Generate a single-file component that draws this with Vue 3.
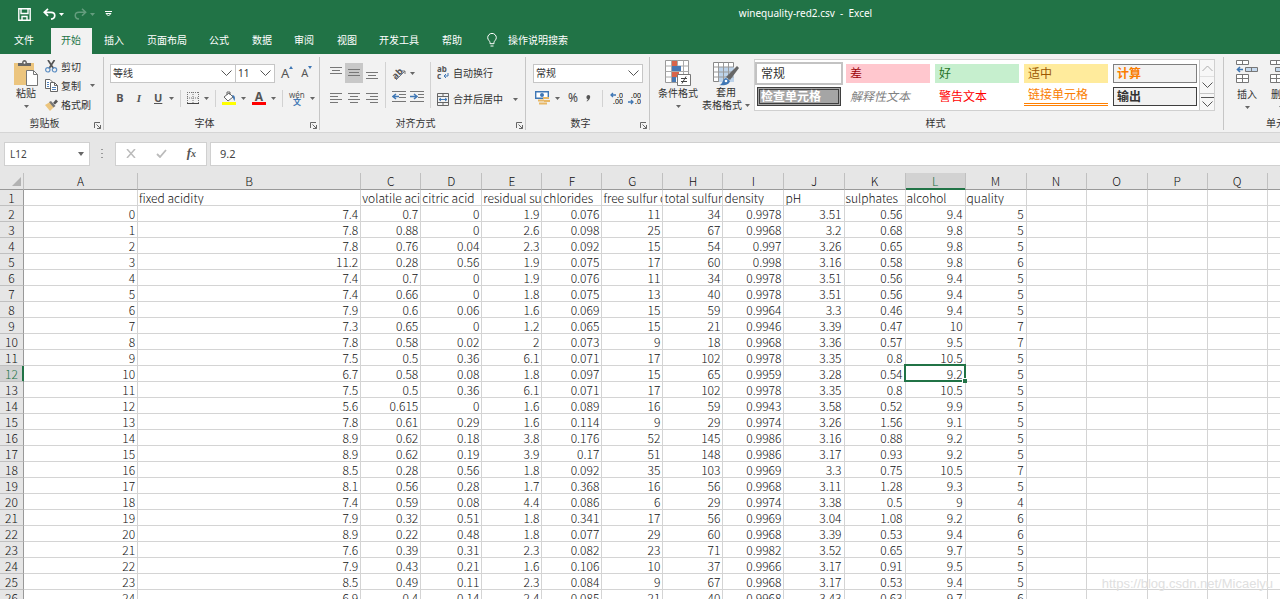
<script setup>
import { ref } from 'vue'

const tabs = ['文件', '开始', '插入', '页面布局', '公式', '数据', '审阅', '视图', '开发工具', '帮助']
const activeTab = ref('开始')

const cellStyles = [
  { name: '常规', kind: 'normal' },
  { name: '差', kind: 'bad' },
  { name: '好', kind: 'good' },
  { name: '适中', kind: 'neutral' },
  { name: '计算', kind: 'calc' },
  { name: '检查单元格', kind: 'check' },
  { name: '解释性文本', kind: 'explain' },
  { name: '警告文本', kind: 'warn' },
  { name: '链接单元格', kind: 'linked' },
  { name: '输出', kind: 'output' },
]

const columns = 'ABCDEFGHIJKLMNOPQR'.split('')
const headings = ['', 'fixed acidity', 'volatile acidity', 'citric acid', 'residual sugar', 'chlorides', 'free sulfur dioxide', 'total sulfur dioxide', 'density', 'pH', 'sulphates', 'alcohol', 'quality']
const records = `7.4 0.7 0 1.9 0.076 11 34 0.9978 3.51 0.56 9.4 5
7.8 0.88 0 2.6 0.098 25 67 0.9968 3.2 0.68 9.8 5
7.8 0.76 0.04 2.3 0.092 15 54 0.997 3.26 0.65 9.8 5
11.2 0.28 0.56 1.9 0.075 17 60 0.998 3.16 0.58 9.8 6
7.4 0.7 0 1.9 0.076 11 34 0.9978 3.51 0.56 9.4 5
7.4 0.66 0 1.8 0.075 13 40 0.9978 3.51 0.56 9.4 5
7.9 0.6 0.06 1.6 0.069 15 59 0.9964 3.3 0.46 9.4 5
7.3 0.65 0 1.2 0.065 15 21 0.9946 3.39 0.47 10 7
7.8 0.58 0.02 2 0.073 9 18 0.9968 3.36 0.57 9.5 7
7.5 0.5 0.36 6.1 0.071 17 102 0.9978 3.35 0.8 10.5 5
6.7 0.58 0.08 1.8 0.097 15 65 0.9959 3.28 0.54 9.2 5
7.5 0.5 0.36 6.1 0.071 17 102 0.9978 3.35 0.8 10.5 5
5.6 0.615 0 1.6 0.089 16 59 0.9943 3.58 0.52 9.9 5
7.8 0.61 0.29 1.6 0.114 9 29 0.9974 3.26 1.56 9.1 5
8.9 0.62 0.18 3.8 0.176 52 145 0.9986 3.16 0.88 9.2 5
8.9 0.62 0.19 3.9 0.17 51 148 0.9986 3.17 0.93 9.2 5
8.5 0.28 0.56 1.8 0.092 35 103 0.9969 3.3 0.75 10.5 7
8.1 0.56 0.28 1.7 0.368 16 56 0.9968 3.11 1.28 9.3 5
7.4 0.59 0.08 4.4 0.086 6 29 0.9974 3.38 0.5 9 4
7.9 0.32 0.51 1.8 0.341 17 56 0.9969 3.04 1.08 9.2 6
8.9 0.22 0.48 1.8 0.077 29 60 0.9968 3.39 0.53 9.4 6
7.6 0.39 0.31 2.3 0.082 23 71 0.9982 3.52 0.65 9.7 5
7.9 0.43 0.21 1.6 0.106 10 37 0.9966 3.17 0.91 9.5 5
8.5 0.49 0.11 2.3 0.084 9 67 0.9968 3.17 0.53 9.4 5
6.9 0.4 0.14 2.4 0.085 21 40 0.9968 3.43 0.63 9.7 6`
  .split('\n')
  .map((line, i) => [String(i), ...line.split(' ')])

const selected = ref({ row: 12, col: 'L' })
const rows = [headings, ...records]
const pick = (row, col) => { selected.value = { row, col } }
const isSelected = (row, col) => selected.value.row === row && selected.value.col === col
const valueAt = ({ row, col }) => rows[row - 1][columns.indexOf(col)] ?? ''
</script>

<template>
  <div class="app">
    <header class="top">
      <div class="titlebar">
        <div class="quick">
          <button aria-label="保存"><svg width="13" height="13" viewBox="0 0 13 13" fill="none" stroke="#fff" stroke-width="1.4"><path d="M.8.8h11.4v11.4H.8zM3 1v4.5h7V1M4 12V8.5h5V12" /></svg></button>
          <button aria-label="撤消"><svg width="13" height="12" viewBox="0 0 13 12" fill="none" stroke="#fff" stroke-width="1.7"><path d="M5 .8 1.3 4.3 5 7.8M1.5 4.3H8c5 0 5 6 0 6.8" /></svg></button>
          <button class="tiny" aria-label="撤消选项"><svg width="5" height="3"><path d="M0 0h5L2.500 3z" fill="#fff" /></svg></button>
          <button class="dim" aria-label="恢复"><svg width="13" height="12" viewBox="0 0 13 12" fill="none" stroke="#fff" stroke-width="1.500"><path d="M8 .8l3.700 3.500L8 7.800M11.500 4.300H5c-5 0-5 6 0 6.800" /></svg></button>
          <button class="tiny dim" aria-label="恢复选项"><svg width="5" height="3"><path d="M0 0h5L2.500 3z" fill="#fff" /></svg></button>
          <button class="custom" aria-label="自定义"><svg width="7" height="6" fill="none" stroke="#fff"><path d="M0 .5h7M1 2.500h5L3.500 5z" /></svg></button>
        </div>
        <h1>winequality-red2.csv&nbsp; -&nbsp; Excel</h1>
      </div>
      <nav class="tabs">
        <button v-for="t in tabs" :key="t" :class="{ active: t === activeTab }" @click="activeTab = t">{{ t }}</button>
        <button class="tell">
          <svg width="10" height="14" viewBox="0 0 10 14" fill="none" stroke="#fff"><path d="M3 9.500C3 8 .7 7 .7 4.700a4.300 4.300 0 0 1 8.600 0C9.300 7 7 8 7 9.500v1.200H3zM3.500 13h3" /></svg>
          操作说明搜索
        </button>
      </nav>
    </header>

    <section class="ribbon">
      <div class="group clipboard">
        <div class="body">
          <button class="big">
            <svg width="24" height="26" viewBox="0 0 24 26"><path d="M0 3h20v22H0z" fill="#ecc57e" /><path d="M4 6V3h4c0-4 5-4 5 0h4v3z" fill="#666" /><circle cx="10.500" cy="2.800" r="1" fill="#fff" /><path d="M12.500 10.500h7l4 4v11h-11z" fill="#fff" stroke="#777" /><path d="M19.500 10.500v4h4" fill="none" stroke="#777" /></svg>
            <span>粘贴</span>
            <svg class="caret" width="5" height="3"><path d="M0 0h5L2.500 3z" /></svg>
          </button>
          <div class="stack">
            <button>
              <svg width="13" height="13" viewBox="0 0 13 13" fill="none"><path d="M3 0l5.500 8.500M9.500 0 4 8.500" stroke="#555" stroke-width="1.700" /><circle cx="2.800" cy="9.800" r="2.200" stroke="#5e8fc4" stroke-width="1.200" /><circle cx="9.500" cy="9.800" r="2.200" stroke="#5e8fc4" stroke-width="1.200" /></svg>剪切
            </button>
            <button>
              <svg width="13" height="13" viewBox="0 0 13 13" fill="#fff" stroke="#666"><path d="M.5.5H5L7.500 3v6.500h-7z" /><path d="M5.500 3.500h4l3 3v6h-7zM9.500 3.500v3h3" /><path d="M2 3.500h2M2 5.500h2M2 7.500h2M7 8.500h4M7 10.500h4" stroke="#4f81bd" /></svg>复制
              <svg class="caret push" width="5" height="3"><path d="M0 0h5L2.500 3z" /></svg>
            </button>
            <button>
              <svg width="13" height="12" viewBox="0 0 13 12"><path d="M0 6l5-3 4 5-4 4z" fill="#ecc57e" /><path d="M4 3l2-1 4.500 5-2 1.500z" fill="#777" /><path d="M8 4l3-3.500 2 2L10 5.500z" fill="#555" /></svg>格式刷
            </button>
          </div>
        </div>
        <footer>剪贴板<button class="launch" aria-label="剪贴板设置"><svg width="7" height="7" fill="none" stroke="#666"><path d="M.5 6V.5H6M2.500 2.500l4 4M6.500 3v3.500H3" /></svg></button></footer>
      </div>

      <div class="group font">
        <div class="body rows">
          <div class="line combos">
            <label class="combo family"><select aria-label="字体"><option>等线</option></select><svg width="11" height="7"><path d="M.5.5l5 5 5-5" /></svg></label>
            <label class="combo size"><select aria-label="字号"><option>11</option></select><svg width="11" height="7"><path d="M.5.5l5 5 5-5" /></svg></label>
            <button class="grow" aria-label="增大字号">A<svg width="4" height="3"><path d="M0 3h4L2 0z" fill="#3f77b5" /></svg></button>
            <button class="grow small" aria-label="减小字号">A<svg width="4" height="3"><path d="M0 0h4L2 3z" fill="#3f77b5" /></svg></button>
          </div>
          <div class="line marks">
            <button class="letter">B</button>
            <button class="letter italic">I</button>
            <button class="letter under">U</button>
            <svg class="caret" width="5" height="3"><path d="M0 0h5L2.500 3z" /></svg>
            <i class="sep"></i>
            <button aria-label="边框"><svg width="12" height="12" fill="none" stroke="#777"><path d="M0 .5h12M.5 0v11M6 0v11M11.500 0v11M0 6h12" stroke-dasharray="1 1" /><path d="M0 11.500h12" stroke="#444" /></svg></button>
            <svg class="caret" width="5" height="3"><path d="M0 0h5L2.500 3z" /></svg>
            <i class="sep"></i>
            <button aria-label="填充颜色"><svg width="14" height="15" viewBox="0 0 14 15"><path d="M2 6l5-4 4 4-5 4zM5 4V1h3v3" fill="#fff" stroke="#666" /><path d="M10 4c3 0 3.500 3 2.500 6C11 8 11 6 10 4z" fill="#3f77b5" /><path d="M0 11h14v3H0z" fill="#ff0" /></svg></button>
            <svg class="caret" width="5" height="3"><path d="M0 0h5L2.500 3z" /></svg>
            <button class="color" aria-label="字体颜色">A</button>
            <svg class="caret" width="5" height="3"><path d="M0 0h5L2.500 3z" /></svg>
            <i class="sep"></i>
            <button class="pinyin"><span>wén</span><b>文</b></button>
            <svg class="caret" width="5" height="3"><path d="M0 0h5L2.500 3z" /></svg>
          </div>
        </div>
        <footer>字体<button class="launch" aria-label="字体设置"><svg width="7" height="7" fill="none" stroke="#666"><path d="M.5 6V.5H6M2.500 2.500l4 4M6.500 3v3.500H3" /></svg></button></footer>
      </div>

      <div class="group align">
        <div class="body">
          <div class="aligners">
            <button aria-label="顶端对齐"><svg width="12" height="12"><path d="M0 .5h12M2 3.500h8M0 6.500h12" /></svg></button>
            <button class="on" aria-label="垂直居中"><svg width="12" height="12"><path d="M0 2.500h12M1 5.500h10M0 8.500h12" /></svg></button>
            <button aria-label="底端对齐"><svg width="12" height="12"><path d="M0 5.500h12M2 8.500h8M0 11.500h12" /></svg></button>
            <button aria-label="左对齐"><svg width="12" height="12"><path d="M0 1.500h12M0 4.500h8M0 7.500h12M0 10.500h8" /></svg></button>
            <button aria-label="居中"><svg width="12" height="12"><path d="M0 1.500h12M2 4.500h8M0 7.500h12M2 10.500h8" /></svg></button>
            <button aria-label="右对齐"><svg width="12" height="12"><path d="M0 1.500h12M4 4.500h8M0 7.500h12M4 10.500h8" /></svg></button>
          </div>
          <div class="indent">
            <div class="line"><button aria-label="方向"><svg width="14" height="14" viewBox="0 0 14 14"><text x="0" y="10" font-size="9" font-weight="bold" fill="#555" transform="rotate(-45 5 7)">ab</text><path d="M4 13l9-9M13 7V4h-3" fill="none" stroke="#777" /></svg></button><svg class="caret" width="5" height="3"><path d="M0 0h5L2.500 3z" /></svg></div>
            <div class="line"><button aria-label="减少缩进"><svg width="14" height="12" fill="none" stroke="#777"><path d="M0 .5h14M7 3.500h7M7 6.500h7M0 10.500h14" /><path d="M7 5.500H1M4 3L1 5.500 4 8" stroke="#3f77b5" stroke-width="1.500" /></svg></button><button aria-label="增加缩进"><svg width="14" height="12" fill="none" stroke="#777"><path d="M0 .5h14M8 3.500h6M8 6.500h6M0 10.500h14" /><path d="M0 5.500h6M4 3l3 2.500L4 8" stroke="#3f77b5" stroke-width="1.500" /></svg></button></div>
          </div>
          <div class="wrap">
            <button class="line"><svg width="12" height="14" viewBox="0 0 12 14"><text x="0" y="6" font-size="8" font-weight="bold" fill="#555">ab</text><text x="0" y="13" font-size="8" font-weight="bold" fill="#555">c</text><path d="M11 7v3H7M9 8l-2 2 2 2" fill="none" stroke="#3f77b5" /></svg><span>自动换行</span></button>
            <button class="line"><svg width="12" height="13" fill="none" stroke="#666"><path d="M.5.5h11v12H.5zM.5 3.500h11M.5 9.500h11M6 .5v3M6 9.500v3" /><path d="M2 6.500h8M4 5L2 6.500 4 8M8 5l2 1.500L8 8" stroke="#3f77b5" /></svg><span>合并后居中</span><svg class="caret push" width="5" height="3"><path d="M0 0h5L2.500 3z" /></svg></button>
          </div>
        </div>
        <footer>对齐方式<button class="launch" aria-label="对齐设置"><svg width="7" height="7" fill="none" stroke="#666"><path d="M.5 6V.5H6M2.500 2.500l4 4M6.500 3v3.500H3" /></svg></button></footer>
      </div>

      <div class="group number">
        <div class="body rows">
          <div class="line"><label class="combo format"><select aria-label="数字格式"><option>常规</option></select><svg width="11" height="7"><path d="M.5.5l5 5 5-5" /></svg></label></div>
          <div class="line nums">
            <button aria-label="会计数字格式"><svg width="15" height="14" viewBox="0 0 15 14"><path d="M.7.700h12.600v6.600H.7z" fill="#fff" stroke="#3f77b5" stroke-width="1.400" /><circle cx="7" cy="4" r="2" fill="#3f77b5" /><path d="M8 6h6v2H8zM9 9h6v2H9zM3 8.500h6v2H3zM4 11.500h8v2H4z" fill="#e8b765" /></svg></button>
            <svg class="caret" width="5" height="3"><path d="M0 0h5L2.500 3z" /></svg>
            <button class="percent">%</button>
            <button class="comma" aria-label="千位分隔"><svg width="5" height="7"><path d="M2.500 0C5 0 5 4 1 6.500L.5 6C2 5 2 4.500 1.500 4 0 3.500 0 0 2.500 0z" fill="#555" /></svg></button>
            <i class="sep"></i>
            <button aria-label="增加小数位数"><svg width="13" height="13" viewBox="0 0 13 13"><text x="7" y="6" font-size="7">.0</text><text x="3" y="12" font-size="7">.00</text><path d="M6 3H1M3 1L1 3l2 2" fill="none" stroke="#3f77b5" stroke-width="1.300" /></svg></button>
            <button aria-label="减少小数位数"><svg width="13" height="13" viewBox="0 0 13 13"><text x="3" y="6" font-size="7">.00</text><text x="7" y="12" font-size="7">.0</text><path d="M0 10h5M3 8l2 2-2 2" fill="none" stroke="#3f77b5" stroke-width="1.300" /></svg></button>
          </div>
        </div>
        <footer>数字<button class="launch" aria-label="数字设置"><svg width="7" height="7" fill="none" stroke="#666"><path d="M.5 6V.5H6M2.500 2.500l4 4M6.500 3v3.500H3" /></svg></button></footer>
      </div>

      <div class="group styles">
        <div class="body">
          <button class="big cond">
            <svg width="26" height="26" viewBox="0 0 26 26"><path d="M.5.5h23v22H.5z" fill="#fff" stroke="#999" /><path d="M.5 6h23M.5 11.500h23M.5 17h23M6.500.5v22M12.500.5v22M18.500.5v22" stroke="#aaa" /><path d="M7 1h5v5H7zM7 12h7v5H7z" fill="#d9644a" /><path d="M7 6h9v5H7zM7 17h4v5H7z" fill="#4778b4" /><path d="M12.500 14.500h13v11h-13z" fill="#fff" stroke="#777" /><path d="M16 18.500h6M16 21.500h6M21 16.500l-4 7" stroke="#444" /></svg>
            <span>条件格式</span>
            <svg class="caret" width="5" height="3"><path d="M0 0h5L2.500 3z" /></svg>
          </button>
          <button class="big tablefmt">
            <svg width="26" height="25" viewBox="0 0 26 25"><path d="M.5 1.500h20v19H.5z" fill="#fff" stroke="#888" /><path d="M6 6h15v15H6z" fill="#bdd3ea" /><path d="M.5 6h20M.5 11h20M.5 16h20M5.500 1.500v19M10.500 1.500v19M15.500 1.500v19" stroke="#999" /><path d="M24 5l2 2-9 12-4-3z" fill="#666" /><path d="M6 24c4 0 3-6 7-7l4 3c-1 4-6 5-11 4z" fill="#3f77b5" /><circle cx="13" cy="20" r="1.300" fill="#fff" /></svg>
            <span>套用</span>
            <span class="last">表格格式 <svg class="caret" width="5" height="3"><path d="M0 0h5L2.500 3z" /></svg></span>
          </button>
          <div class="gallery">
            <div class="swatches">
              <button v-for="s in cellStyles" :key="s.kind" :class="s.kind">{{ s.name }}</button>
            </div>
            <div class="scroll">
              <button class="off" aria-label="上一行"><svg width="11" height="7"><path d="M.5 6l5-5 5 5" /></svg></button>
              <button aria-label="下一行"><svg width="11" height="7"><path d="M.5.5l5 5 5-5" /></svg></button>
              <button aria-label="其他样式"><svg width="13" height="11"><path d="M0 .5h13M1.500 4.500l5 5 5-5" /></svg></button>
            </div>
          </div>
        </div>
        <footer>样式</footer>
      </div>

      <div class="group cells">
        <div class="body">
          <button class="big">
            <svg width="22" height="24" viewBox="0 0 22 24" fill="#fff" stroke="#777"><path d="M.5.5h12v4H.5zM6.500.5v4M.5 14.500h12v8H.5zM6.500 14.500v8M.5 18.500h12" /><path d="M9.500 7.500h12v4h-12zM15.500 7.500v4" fill="#c5d9ee" /><path d="M7 9.500H1.500M4 7L1.500 9.500 4 12" stroke="#3f77b5" stroke-width="1.600" fill="none" /></svg>
            <span>插入</span>
            <svg class="caret" width="5" height="3"><path d="M0 0h5L2.500 3z" /></svg>
          </button>
          <button class="big">
            <svg width="22" height="24" viewBox="0 0 22 24" fill="#fff" stroke="#777"><path d="M.5.5h12v4H.5zM6.500.5v4M.5 14.500h12v8H.5zM6.500 14.500v8M.5 18.500h12" /><path d="M5.500 7.500h12v4h-12z" fill="#c5d9ee" /></svg>
            <span>删除</span>
            <svg class="caret" width="5" height="3"><path d="M0 0h5L2.500 3z" /></svg>
          </button>
        </div>
        <footer>单元格</footer>
      </div>
    </section>

    <section class="formula">
      <div class="namebox">
        <input :value="selected.col + selected.row" aria-label="名称框" />
        <button aria-label="名称列表"><svg width="6" height="4"><path d="M0 0h6L3 4z" fill="#666" /></svg></button>
      </div>
      <svg class="grip" width="2" height="9" fill="#999"><path d="M0 0h2v1H0zM0 4h2v1H0zM0 8h2v1H0z" /></svg>
      <div class="actions">
        <button aria-label="取消"><svg width="10" height="9"><path d="M1 0l8 9M9 0L1 9" fill="none" stroke="#bbb" stroke-width="1.500" /></svg></button>
        <button aria-label="输入"><svg width="11" height="9"><path d="M1 5l3 3 6-7" fill="none" stroke="#bbb" stroke-width="1.800" /></svg></button>
        <button class="fx" aria-label="插入函数">f<small>x</small></button>
      </div>
      <input class="entry" :value="valueAt(selected)" aria-label="编辑栏" />
    </section>

    <main class="sheet">
      <table>
        <colgroup>
          <col class="c-num" /><col class="c-a" /><col class="c-b" />
          <col v-for="n in 16" :key="n" :class="[2, 5, 7, 9, 11, 13].includes(n) ? 'c-wide' : 'c-std'" />
        </colgroup>
        <thead>
          <tr>
            <th class="corner"><svg width="9" height="9"><path d="M9 0v9H0z" fill="#b2b2b2" /></svg></th>
            <th v-for="c in columns" :key="c" scope="col" :class="{ current: c === selected.col }">{{ c }}</th>
          </tr>
        </thead>
        <tbody>
          <tr v-for="(r, i) in rows" :key="i">
            <th scope="row" :class="{ current: i + 1 === selected.row }">{{ i + 1 }}</th>
            <td v-for="(c, j) in columns" :key="c" :class="{ heading: i === 0, selected: isSelected(i + 1, c) }" @click="pick(i + 1, c)">{{ r[j] }}</td>
          </tr>
        </tbody>
      </table>
      <div class="watermark">https://blog.csdn.net/Micaelyu</div>
    </main>
  </div>
</template>

<style>
body { margin: 0; overflow: hidden; }
</style>

<style scoped>
* { box-sizing: border-box; }
.app { height: 100vh; display: flex; flex-direction: column; overflow: hidden; background: #e6e6e6; color: #333; font: 10px/14px "Noto Sans", "Noto Sans CJK SC", sans-serif; }
button { border: 0; padding: 0; margin: 0; background: none; color: inherit; font: inherit; white-space: nowrap; }
svg { display: block; flex: none; }
input, select { font: inherit; color: inherit; border: 0; padding: 0; outline: 0; }
.caret { fill: #666; }

.top { background: #217346; color: #fff; flex: none; }
.titlebar { height: 28px; display: flex; align-items: center; position: relative; }
.quick { display: flex; align-items: center; padding-left: 18px; }
.quick button { margin-right: 12px; }
.quick button:nth-child(2), .quick button:nth-child(4) { margin-right: 3px; }
.quick .tiny { margin-right: 10px; }
.quick .custom { margin: 0; }
.dim { opacity: .3; }
h1 { position: absolute; left: 0; right: 0; margin: 0; padding: 0 0 2px 331px; font-size: 10px; font-weight: 400; text-align: center; pointer-events: none; }
.tabs { display: flex; height: 26px; }
.tabs button { padding: 0 11px 2px; }
.tabs button:nth-child(even) { padding-left: 12px; }
.tabs button:first-child { padding: 0 17px 2px 14px; }
.tabs button.active { background: #f2f2f2; color: #217346; padding: 0 11px 2px 10px; margin-right: 1px; }
.tabs .tell { display: flex; align-items: center; gap: 11px; padding-left: 14px; }

.ribbon { display: flex; flex: none; height: 79px; background: #f2f2f2; border-bottom: 1px solid #d5d5d5; overflow: hidden; color: #333; }
.group { flex: none; display: flex; flex-direction: column; position: relative; margin: 3px 0 2px; border-right: 1px solid #c6c6c6; }
.body { display: flex; flex: 1; }
.group footer { position: relative; height: 14px; text-align: center; padding-right: 14px; }
.launch { position: absolute; right: 2px; bottom: 1px; }
.clipboard { width: 104px; }
.font { width: 216px; }
.align { width: 206px; }
.number { width: 124px; }
.styles { width: 574px; }
.cells { width: 114px; border: 0; }
.styles footer { padding-right: 2px; }
.cells footer { padding-right: 0; }
.big { display: flex; flex-direction: column; align-items: center; justify-content: flex-start; padding-top: 3px; line-height: 14px; }
.big > .caret { margin-top: 5px; }
.clipboard .big { margin-left: 13px; width: 26px; }
.stack { margin-left: 6px; display: flex; flex-direction: column; }
.stack button { display: flex; align-items: center; gap: 3px; height: 19px; }
.push { margin-left: 6px; }

.rows { flex-direction: column; }
.line { display: flex; align-items: center; height: 26px; }
.combo { position: relative; display: flex; align-items: center; height: 19px; background: #fff; border: 1px solid #c6c6c6; }
.combo select { appearance: none; background: none; width: 100%; height: 100%; padding-left: 2px; }
.combo svg { position: absolute; right: 3px; pointer-events: none; }
.combo svg, .scroll svg { fill: none; stroke: #555; }
.combos { padding: 4px 0 0 6px; height: 28px; }
.family { width: 126px; }
.size { width: 40px; margin-left: -1px; }
.grow { display: flex; align-items: flex-start; margin-left: 6px; font-size: 13px; color: #555; }
.grow.small { font-size: 11px; margin-left: 8px; }
.marks { padding-left: 12px; }
.letter { width: 8px; margin-right: 11px; font-weight: 700; color: #555; font-size: 11px; }
.italic { font-family: "Liberation Serif", serif; font-style: italic; }
.under { text-decoration: underline; margin-right: 7px; }
.sep { width: 1px; height: 17px; background: #d2d2d2; margin: 0 6px; }
.marks button:not(.letter) { margin-right: 5px; }
.marks .color { margin-left: 6px; width: 14px; height: 14px; border-bottom: 3px solid red; font-size: 12px; line-height: 11px; font-weight: 700; color: #555; }
.pinyin { display: flex; flex-direction: column; align-items: center; font-size: 8px; line-height: 7px; color: #555; }
.pinyin b { color: #3f77b5; }

.aligners { display: grid; grid-template-columns: repeat(3, 18px); grid-template-rows: 20px 20px; row-gap: 5px; padding: 6px 0 0 7px; }
.aligners button { display: flex; align-items: center; justify-content: center; }
.aligners svg, .aligners path { fill: none; stroke: #777; }
.aligners .on { background: #c8c8c8; }
.indent { margin: 5px 0 6px 4px; padding: 0 5px 0 6px; border: solid #d2d2d2; border-width: 0 1px; height: 46px; width: 46px; }
.indent .line { height: 23px; gap: 4px; }
.wrap { padding: 3px 0 0 6px; }
.wrap .line { height: 26px; gap: 4px; }

.number .line { padding-left: 7px; }
.number .line:first-child { padding-top: 4px; height: 28px; }
.format { width: 110px; }
.number .nums { gap: 5px; padding-left: 9px; }
.nums .sep { margin: 0 2px; }
.percent { font-size: 12px; color: #444; margin-left: 3px; }
.comma { margin: 0 4px 0 3px; }

.cond { margin-left: 8px; width: 40px; }
.tablefmt { margin-left: 3px; width: 50px; padding-top: 4px; line-height: 13px; }
.last { display: flex; align-items: center; gap: 3px; }
.gallery { display: flex; height: 52px; margin: 2px 0 0 3px; background: #fff; border: 1px solid #d0d0d0; }
.swatches { display: grid; grid-template-columns: repeat(5, 84px); grid-template-rows: 19px 19px; gap: 4px 5px; padding: 4px 2px; }
.swatches button { font-size: 12px; line-height: 17px; text-align: left; padding: 0 4px; }
.normal { box-shadow: 0 0 0 2px #c3c3c3; }
.bad { background: #ffc7ce; color: #9c0006; }
.good { background: #c6efce; color: #267326; }
.neutral { background: #ffeb9c; color: #9c5700; }
.swatches .calc { background: #f2f2f2; border: 1px solid #7f7f7f; color: #fa7d00; font-weight: 700; padding: 0 3px; }
.swatches .check { background: #a5a5a5; border: 3px double #3f3f3f; color: #fff; font-weight: 700; padding: 0 1px; line-height: 13px; }
.explain { color: #7f7f7f; font-style: italic; }
.warn { color: #f00; }
.swatches .linked { color: #fa7d00; border-bottom: 3px double #ff8001; line-height: 16px; }
.swatches .output { background: #f2f2f2; border: 1px solid #3f3f3f; font-weight: 700; padding: 0 3px; }
.scroll { width: 15px; display: flex; flex-direction: column; border-left: 1px solid #c6c6c6; background: #f7f7f7; }
.scroll button { flex: 1; display: flex; align-items: center; justify-content: center; border-bottom: 1px solid #c6c6c6; }
.scroll button:last-child { border: 0; }
.scroll .off { opacity: .45; }
.cells .big { width: 22px; margin: 0 0 0 12px; }
.cells .big span { margin-top: 3px; }

.formula { flex: none; display: flex; align-items: center; height: 40px; padding: 1px 0 0 4px; color: #444; }
.namebox, .actions, .entry { height: 24px; background: #fff; border: 1px solid #d0d0d0; }
.namebox { width: 86px; display: flex; align-items: center; padding: 0 5px; }
.namebox input { flex: 1; min-width: 0; }
.grip { margin: 0 12px 0 11px; }
.actions { display: flex; align-items: center; justify-content: space-between; width: 92px; padding: 0 10px; }
.fx { font: italic 700 13px/14px "Liberation Serif", serif; color: #555; }
.fx small { font-size: 10px; }
.formula .entry { flex: 1; margin-left: 3px; padding-left: 9px; font-size: 11px; border-right: 0; }

.sheet { flex: 1; min-height: 0; overflow: hidden; position: relative; background: #fff; }
table { table-layout: fixed; width: 1328px; border-collapse: separate; border-spacing: 0; font-family: "Noto Sans CJK SC", sans-serif; font-weight: 300; font-size: 12px; line-height: 15px; }
.c-num { width: 24px; }
.c-a { width: 114px; }
.c-b { width: 223px; }
.c-std { width: 60px; }
.c-wide { width: 61px; }
th, td { height: 16px; padding: 0 2px 0 1px; overflow: hidden; white-space: nowrap; border: solid #d4d4d4; border-width: 0 1px 1px 0; color: #111; }
td { text-align: right; }
td.heading { text-align: left; }
th { font-weight: 300; background: #e6e6e6; border-color: #c0c0c0; text-align: center; padding: 0; }
thead th { border-bottom-color: #999; height: 17px; line-height: 16px; }
tbody th { border-right-color: #999; }
.corner svg { margin-left: 12px; }
th.current { background: #d2d2d2; color: #217346; }
thead .current { box-shadow: inset 0 -1px #217346; border-bottom-color: #217346; }
tbody .current { box-shadow: inset -1px 0 #217346; border-right-color: #217346; }
.selected { position: relative; overflow: visible; }
.selected::before { content: ""; position: absolute; inset: -2px -1px -1px -2px; border: 2px solid #217346; }
.selected::after { content: ""; position: absolute; right: -2px; bottom: -2px; width: 4px; height: 4px; background: #217346; border: solid #fff; border-width: 1px 0 0 1px; box-sizing: content-box; }
.watermark { position: absolute; right: 7px; bottom: 7px; color: #e0e0e0; font: 13px/16px "Liberation Sans", sans-serif; }
</style>
